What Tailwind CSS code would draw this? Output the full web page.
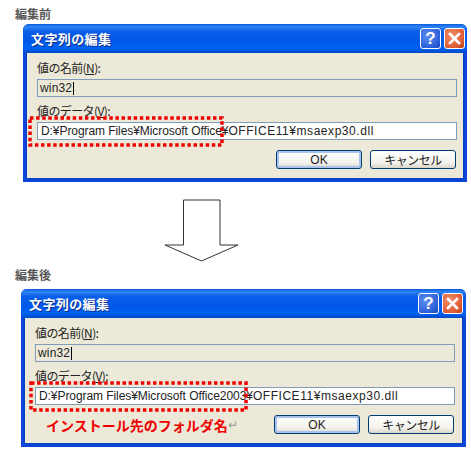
<!DOCTYPE html>
<html lang="ja">
<head>
<meta charset="UTF-8">
<title>文字列の編集</title>
<script src="https://cdn.jsdelivr.net/npm/@tailwindcss/browser@4"></script>
</head>
<body class="bg-white">
<div class="w-[471px] h-[450px] overflow-hidden font-['Liberation_Sans','Noto_Sans_CJK_JP',sans-serif] text-[12px] leading-[14px] text-[#222]">

  <!-- before -->
  <div class="pl-[15px] pt-[7px] h-[24px] font-bold text-[#555] font-['Noto_Sans_CJK_JP',sans-serif]">編集前</div>
  <div class="relative ml-[23px] w-[444px] h-[158px] rounded-t-[6px] border-x-[3px] border-b-[3px] border-[#0a46d8] bg-[#ece9d8] shadow-[inset_0_0_0_1px_#0a3fc0]">
    <div class="-mx-[3px] flex h-[29px] items-center justify-between rounded-t-[6px] pl-[8px] pr-[2px] bg-[linear-gradient(180deg,#0a5ad8_0%,#2f86f7_10%,#0a5fe8_25%,#0058e8_60%,#0062f0_85%,#0048c8_100%)]">
      <span class="font-bold text-[13px] tracking-[0.4px] text-white [text-shadow:1px_1px_0_#0a2f90] font-['Noto_Sans_CJK_JP',sans-serif]">文字列の編集</span>
      <div class="flex gap-[3px]">
        <div class="flex h-[21px] w-[21px] items-center justify-center rounded-[3px] border border-white bg-[radial-gradient(circle_at_35%_35%,#5f8ff0,#2a5fd8_70%,#1c45b8)] text-[17px] font-bold text-white">?</div>
        <div class="flex h-[21px] w-[21px] items-center justify-center rounded-[3px] border border-white bg-[radial-gradient(circle_at_35%_35%,#f0906a,#dc5a32_70%,#b83a18)]">
          <svg width="13" height="13" viewBox="0 0 13 13"><path d="M2 2 L11 11 M11 2 L2 11" stroke="#fff" stroke-width="2.6" stroke-linecap="square"/></svg>
        </div>
      </div>
    </div>
    <div class="pl-[11px] pr-[7px] pt-[8px]">
      <div class="h-[18px] font-['Noto_Sans_CJK_JP',sans-serif] tracking-[-0.6px]">値の名前(<span class="underline">N</span>):</div>
      <div class="flex h-[18px] items-center border border-[#7f9db9] pl-[2px] tracking-[0.17px]">win32<span class="ml-[1px] h-[13px] w-px bg-black"></span></div>
      <div class="mt-[7px] h-[18px] font-['Noto_Sans_CJK_JP',sans-serif] tracking-[-0.6px]">値のデータ(<span class="underline">V</span>):</div>
      <div class="flex h-[18px] items-center border border-[#7f9db9] bg-white pl-[3px]"><span class="tracking-[-0.07px]">D:¥Program Files¥Microsoft Office¥</span><span class="tracking-[0.55px]">OFFICE11¥msaexp30.dll</span></div>
      <div class="mt-[10px] flex justify-end gap-[8px] pr-[1px]">
        <button class="h-[19px] w-[86px] rounded-[3px] border border-[#003c74] bg-[linear-gradient(180deg,#fff,#f3f2ec_70%,#d8d4c8)] leading-none shadow-[inset_0_0_0_2px_#a8c4ec]">OK</button>
        <button class="h-[19px] w-[86px] rounded-[3px] border border-[#003c74] bg-[linear-gradient(180deg,#fff,#f3f2ec_70%,#d8d4c8)] leading-none font-['Noto_Sans_CJK_JP',sans-serif] tracking-[-0.5px]">キャンセル</button>
      </div>
    </div>
    <svg class="absolute left-[2px] top-[92px]" width="198" height="32" viewBox="0 0 198 32" fill="none"><rect x="2" y="2" width="192" height="27" stroke="#f00000" stroke-width="3.5" stroke-dasharray="3.5 2.6"/></svg>
  </div>

  <!-- arrow -->
  <svg class="ml-[164px] mt-[17px]" width="76" height="63" viewBox="0 0 76 63" fill="#fff"><path d="M19.5 1 H56 V46 H74 L37.5 62 L1 46 H19.5 Z" stroke="#333" stroke-width="1"/></svg>

  <!-- after -->
  <div class="pl-[15px] pt-[6px] h-[27px] font-bold text-[#555] font-['Noto_Sans_CJK_JP',sans-serif]">編集後</div>
  <div class="relative ml-[21px] w-[445px] h-[158px] rounded-t-[6px] border-x-[3px] border-b-[3px] border-[#0a46d8] bg-[#ece9d8] shadow-[inset_0_0_0_1px_#0a3fc0]">
    <div class="-mx-[3px] flex h-[29px] items-center justify-between rounded-t-[6px] pl-[8px] pr-[3px] bg-[linear-gradient(180deg,#0a5ad8_0%,#2f86f7_10%,#0a5fe8_25%,#0058e8_60%,#0062f0_85%,#0048c8_100%)]">
      <span class="font-bold text-[13px] tracking-[0.4px] text-white [text-shadow:1px_1px_0_#0a2f90] font-['Noto_Sans_CJK_JP',sans-serif]">文字列の編集</span>
      <div class="flex gap-[3px]">
        <div class="flex h-[21px] w-[21px] items-center justify-center rounded-[3px] border border-white bg-[radial-gradient(circle_at_35%_35%,#5f8ff0,#2a5fd8_70%,#1c45b8)] text-[17px] font-bold text-white">?</div>
        <div class="flex h-[21px] w-[21px] items-center justify-center rounded-[3px] border border-white bg-[radial-gradient(circle_at_35%_35%,#f0906a,#dc5a32_70%,#b83a18)]">
          <svg width="13" height="13" viewBox="0 0 13 13"><path d="M2 2 L11 11 M11 2 L2 11" stroke="#fff" stroke-width="2.6" stroke-linecap="square"/></svg>
        </div>
      </div>
    </div>
    <div class="pl-[11px] pr-[8px] pt-[8px]">
      <div class="h-[18px] font-['Noto_Sans_CJK_JP',sans-serif] tracking-[-0.6px]">値の名前(<span class="underline">N</span>):</div>
      <div class="flex h-[18px] items-center border border-[#7f9db9] pl-[2px] tracking-[0.17px]">win32<span class="ml-[1px] h-[13px] w-px bg-black"></span></div>
      <div class="mt-[7px] h-[18px] font-['Noto_Sans_CJK_JP',sans-serif] tracking-[-0.6px]">値のデータ(<span class="underline">V</span>):</div>
      <div class="flex h-[18px] items-center border border-[#7f9db9] bg-white pl-[3px]"><span class="tracking-[-0.07px]">D:¥Program Files¥Microsoft Office2003¥</span><span class="tracking-[0.55px]">OFFICE11¥msaexp30.dll</span></div>
      <div class="mt-[10px] flex items-center justify-between pr-[1px]">
        <div class="ml-[11px] flex items-center">
          <span class="font-bold text-[14px] text-[#f00000] font-['Noto_Sans_CJK_JP',sans-serif]">インストール先のフォルダ名</span><span class="text-[#999]">↵</span>
        </div>
        <div class="flex gap-[8px]">
          <button class="h-[19px] w-[86px] rounded-[3px] border border-[#003c74] bg-[linear-gradient(180deg,#fff,#f3f2ec_70%,#d8d4c8)] leading-none shadow-[inset_0_0_0_2px_#a8c4ec]">OK</button>
          <button class="h-[19px] w-[86px] rounded-[3px] border border-[#003c74] bg-[linear-gradient(180deg,#fff,#f3f2ec_70%,#d8d4c8)] leading-none font-['Noto_Sans_CJK_JP',sans-serif] tracking-[-0.5px]">キャンセル</button>
        </div>
      </div>
    </div>
    <svg class="absolute left-[5px] top-[92px]" width="222" height="32" viewBox="0 0 222 32" fill="none"><rect x="2" y="2" width="215" height="27" stroke="#f00000" stroke-width="3.5" stroke-dasharray="3.5 2.6"/></svg>
  </div>
</div>
</body>
</html>
